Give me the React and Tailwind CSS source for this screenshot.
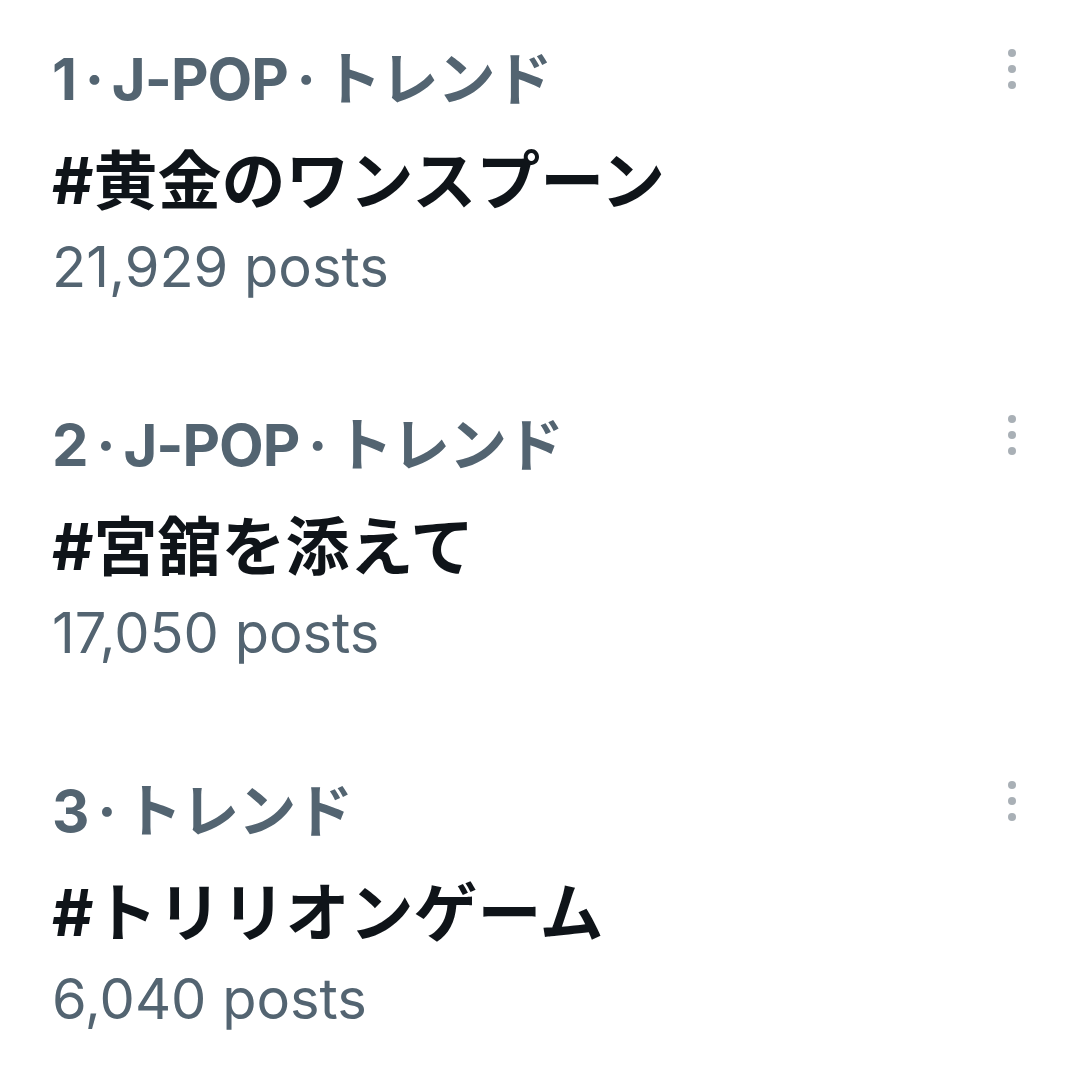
const trends = [
  { category: '1 · J-POP · トレンド', title: '#黄金のワンスプーン', posts: '21,929 posts' },
  { category: '2 · J-POP · トレンド', title: '#宮舘を添えて', posts: '17,050 posts' },
  { category: '3 · トレンド', title: '#トリリオンゲーム', posts: '6,040 posts' },
]

const MoreDots = () => (
  <div className="flex flex-col items-center gap-[8px] mt-[6px]">
    <span className="block w-[8px] h-[8px] rounded-full bg-[#a9b0b6]" />
    <span className="block w-[8px] h-[8px] rounded-full bg-[#a9b0b6]" />
    <span className="block w-[8px] h-[8px] rounded-full bg-[#a9b0b6]" />
  </div>
)

const TrendItem = ({ trend }) => (
  <div className="flex justify-between pl-[52px] pr-[64px] pt-[43px] pb-[63px]">
    <div className="flex flex-col">
      <p className="text-[58px] leading-[72px] font-bold text-[#536471] whitespace-nowrap tracking-[-1px] [word-spacing:-4px]">{trend.category}</p>
      <p className="mt-[21px] text-[64px] leading-[90px] font-bold text-[#0f1419] whitespace-nowrap">{trend.title}</p>
      <p className="mt-[5px] text-[56px] leading-[72px] text-[#536471] whitespace-nowrap">{trend.posts}</p>
    </div>
    <MoreDots />
  </div>
)

export default function App() {
  return (
    <div
      className="w-[1080px] h-[1089px] overflow-hidden bg-white"
      style={{ fontFamily: 'Inter, "Noto Sans CJK JP", sans-serif' }}
    >
      {trends.map((t) => (
        <TrendItem key={t.title} trend={t} />
      ))}
    </div>
  )
}
